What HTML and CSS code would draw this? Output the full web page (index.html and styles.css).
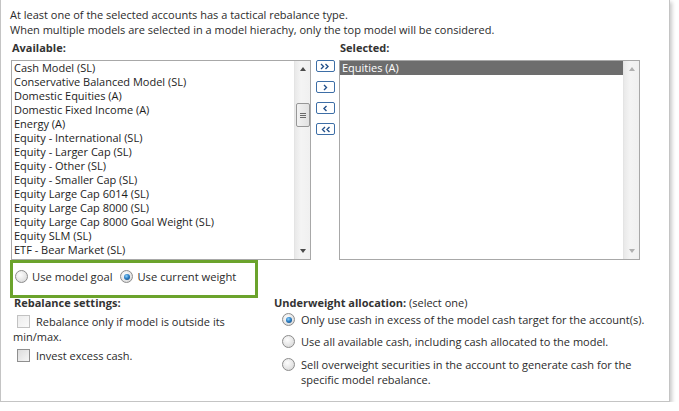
FILE: index.html
```html
<!DOCTYPE html>
<html>
<head>
<meta charset="utf-8">
<link rel="stylesheet" href="styles.css">
</head>
<body>
<div class="panel">
  <p class="intro">At least one of the selected accounts has a tactical rebalance type.<br>When multiple models are selected in a model hierachy, only the top model will be considered.</p>
  <div class="pickers">
    <div class="col col-avail">
      <div class="label">Available:</div>
      <div class="listbox">
        <ul class="items">
          <li>Cash Model (SL)</li>
          <li>Conservative Balanced Model (SL)</li>
          <li>Domestic Equities (A)</li>
          <li>Domestic Fixed Income (A)</li>
          <li>Energy (A)</li>
          <li>Equity - International (SL)</li>
          <li>Equity - Larger Cap (SL)</li>
          <li>Equity - Other (SL)</li>
          <li>Equity - Smaller Cap (SL)</li>
          <li>Equity Large Cap 6014 (SL)</li>
          <li>Equity Large Cap 8000 (SL)</li>
          <li>Equity Large Cap 8000 Goal Weight (SL)</li>
          <li>Equity SLM (SL)</li>
          <li>ETF - Bear Market (SL)</li>
        </ul>
        <div class="scroll">
          <span class="arrow up"></span>
          <div class="track"><div class="thumb"><i></i><i></i><i></i></div></div>
          <span class="arrow down"></span>
        </div>
      </div>
    </div>
    <div class="movers">
      <button class="mv"><svg width="11" height="7" viewBox="0 0 11 7"><path d="M1 1l2.5 2.5L1 6M5.5 1L8 3.5 5.5 6" fill="none" stroke="#23508a" stroke-width="1.4"/></svg></button>
      <button class="mv"><svg width="11" height="7" viewBox="0 0 11 7"><path d="M4 1l2.5 2.5L4 6" fill="none" stroke="#23508a" stroke-width="1.4"/></svg></button>
      <button class="mv"><svg width="11" height="7" viewBox="0 0 11 7"><path d="M6.5 1L4 3.5 6.5 6" fill="none" stroke="#23508a" stroke-width="1.4"/></svg></button>
      <button class="mv"><svg width="11" height="7" viewBox="0 0 11 7"><path d="M5 1L2.5 3.5 5 6M9.5 1L7 3.5 9.5 6" fill="none" stroke="#23508a" stroke-width="1.4"/></svg></button>
    </div>
    <div class="col col-sel">
      <div class="label">Selected:</div>
      <div class="listbox">
        <ul class="items">
          <li class="chosen">Equities (A)</li>
        </ul>
        <div class="scroll disabled">
          <span class="arrow up"></span>
          <div class="track"></div>
          <span class="arrow down"></span>
        </div>
      </div>
    </div>
  </div>
  <div class="weight-row">
    <label class="opt"><span class="radio"></span>Use model goal</label>
    <label class="opt"><span class="radio on"></span>Use current weight</label>
    <div class="highlight"></div>
  </div>
  <div class="bottom">
    <div class="rebal">
      <div class="label">Rebalance settings:</div>
      <p class="check-line"><span class="check faded"></span>Rebalance only if model is outside its<br>min/max.</p>
      <p class="check-line second"><span class="check"></span>Invest excess cash.</p>
    </div>
    <div class="under">
      <div class="label-line"><b>Underweight allocation:</b> (select one)</div>
      <div class="radio-line"><span class="radio on"></span><span>Only use cash in excess of the model cash target for the account(s).</span></div>
      <div class="radio-line"><span class="radio"></span><span>Use all available cash, including cash allocated to the model.</span></div>
      <div class="radio-line last"><span class="radio"></span><span>Sell overweight securities in the account to generate cash for the<br>specific model rebalance.</span></div>
    </div>
  </div>
</div>
</body>
</html>
```

FILE: styles.css
```css
* { box-sizing: border-box; }
html, body { margin: 0; padding: 0; background: #fff; }
body {
  font-family: "Open Sans", "Noto Sans", "DejaVu Sans", sans-serif;
  font-size: 11px;
  line-height: 15px;
  color: #2b2b2b;
}
.panel {
  width: 670px;
  height: 402px;
  border: 1px solid #c4c4c4;
  border-top: none;
  box-shadow: 2px 2px 4px rgba(0,0,0,0.22);
  padding: 7px 0 0 10px;
}
.intro { margin: 0 0 0 -1px; }
.pickers { display: flex; align-items: flex-start; margin-top: 3px; }
.label { font-weight: 700; color: #333; height: 15px; margin-left: 1px; }
.col-avail { width: 300px; }
.col-sel { width: 301px; margin-left: 4px; }
.listbox {
  margin-top: 5px;
  height: 200px;
  border: 1px solid #a8a8a8;
  display: flex;
  background: #fff;
}
.items {
  list-style: none;
  margin: 0;
  padding: 0;
  flex: 1;
  overflow: hidden;
}
.items li {
  height: 14px;
  line-height: 14px;
  padding-left: 2px;
  white-space: nowrap;
  color: #1d1d1d;
}
.items li.chosen { background: #6d6d6d; color: #fff; }
.scroll {
  width: 16px;
  background: linear-gradient(to right, #e9e9e9, #f4f4f4 40%, #f0f0f0);
  border-left: 1px solid #e4e4e4;
  display: flex;
  flex-direction: column;
  align-items: center;
}
.arrow {
  width: 0; height: 0;
  border-left: 3.5px solid transparent;
  border-right: 3.5px solid transparent;
  margin: 6px 0;
}
.arrow.up { border-bottom: 4px solid #4a4a4a; }
.arrow.down { border-top: 4px solid #4a4a4a; }
.scroll.disabled .arrow.up { border-bottom-color: #b0b0b0; }
.scroll.disabled .arrow.down { border-top-color: #b0b0b0; }
.track { flex: 1; width: 100%; padding-top: 26px; display: flex; justify-content: center; }
.thumb {
  width: 14px;
  height: 24px;
  border: 1px solid #979797;
  border-radius: 2px;
  background: linear-gradient(to right, #f2f2f2, #e2e2e2);
  display: flex;
  flex-direction: column;
  align-items: center;
  justify-content: center;
  gap: 1px;
}
.thumb i { display: block; width: 6px; height: 1px; background: #6a6a6a; }
.movers {
  width: 19px;
  margin: 20px 0 0 5px;
  display: flex;
  flex-direction: column;
  gap: 9px;
}
.mv {
  width: 19px;
  height: 12px;
  padding: 0;
  border: 1px solid #3d6ea6;
  border-radius: 2px;
  background: #fff;
  display: flex;
  align-items: center;
  justify-content: center;
}
.mv svg { display: block; }
.weight-row {
  position: relative;
  display: flex;
  align-items: center;
  height: 15px;
  margin-top: 9px;
  margin-left: 4px;
  gap: 8px;
  font-size: 11.2px;
}
.opt { display: flex; align-items: center; gap: 4px; }
.highlight {
  position: absolute;
  left: -5px;
  top: -9px;
  width: 248px;
  height: 38px;
  border: 3px solid #6ba32c;
  pointer-events: none;
}
.radio {
  width: 13px;
  height: 13px;
  border-radius: 50%;
  border: 1px solid #8c8c8c;
  background: radial-gradient(circle at 40% 35%, #fdfdfd 0%, #e6e6e6 55%, #d0d0d0 100%);
  display: inline-flex;
  align-items: center;
  justify-content: center;
  flex: none;
}
.radio.on::after {
  content: "";
  width: 6px;
  height: 6px;
  border-radius: 50%;
  background: radial-gradient(circle at 40% 35%, #8fd3ff 0%, #2d7fc3 45%, #0f3f73 100%);
}
.bottom { display: flex; margin-top: 11px; }
.rebal { width: 262px; margin-left: 2px; }
.rebal .label { margin-left: 1px; }
.check-line { margin: 4px 0 0; }
.check-line.second { margin-top: 4px; }
.check {
  display: inline-block;
  width: 13px;
  height: 13px;
  border: 1px solid #8f8f8f;
  background: linear-gradient(135deg, #dcdcdc, #f6f6f6);
  vertical-align: -2px;
  margin: 0 6px 0 4px;
}
.check.faded { border-color: #c2c2c2; background: linear-gradient(135deg, #ececec, #fafafa); }
.under { margin-left: -1px; }
.label-line b { color: #333; }
.radio-line { display: flex; align-items: flex-start; margin-top: 7px; margin-left: 8px; gap: 6px; }
.radio-line .radio { margin-top: 1px; }
.radio-line:nth-child(2) { margin-top: 2px; }
.radio-line.last { margin-top: 8px; }
```
